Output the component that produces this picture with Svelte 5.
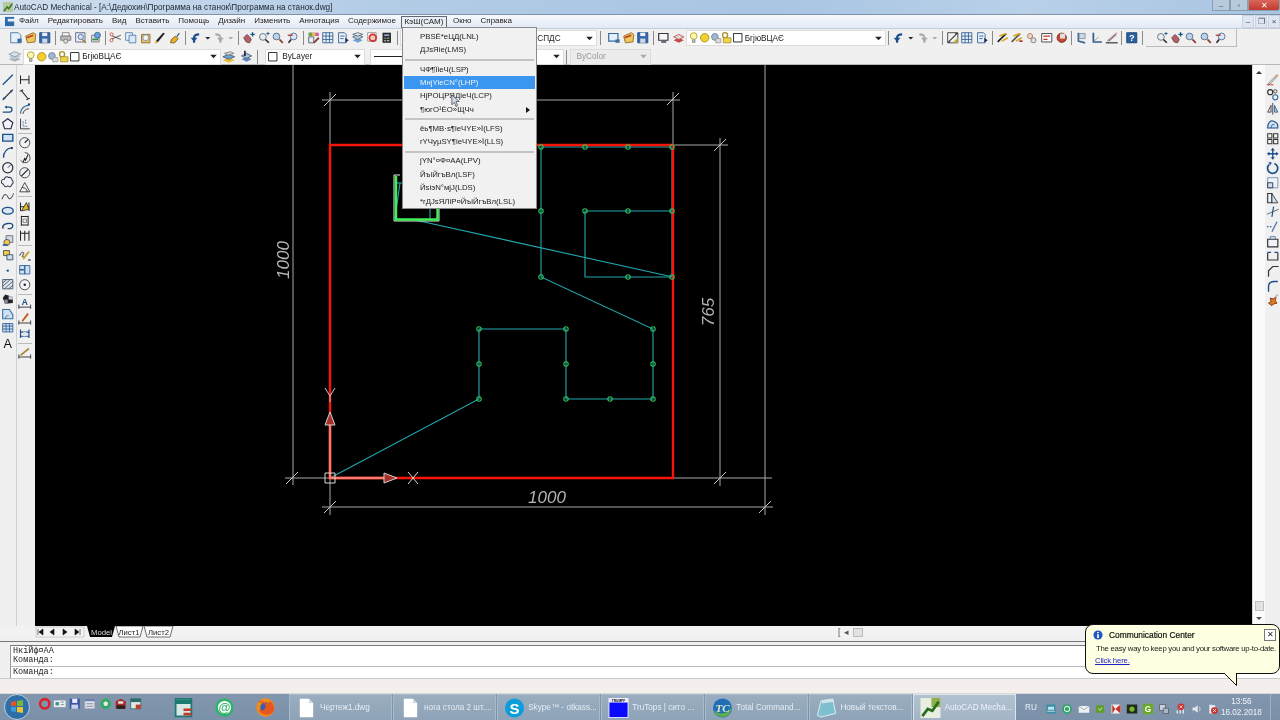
<script>
  const B = '#1c4f8a', D = '#333', G = '#777', Y = '#e8c33a', R = '#c8352a';
  const dim = (extra) => `<path d="M3 3v10M13 3v10M3 8h10" stroke="#222" stroke-width="1.2"/>${extra || ''}`;
  const ic = {
    page: `<path d="M2 2h9l3 3v9H2z" fill="#e6f0fa" stroke="#3f6f9f"/><path d="M10 9h5v5h-5z" fill="#3f6f9f"/>`,
    open: `<path d="M2 6l9-4 3 2-1 9-9 1z" fill="#efc75e" stroke="#8a6a1d"/><path d="M3 8l8-3" stroke="#c0392b" stroke-width="2"/>`,
    save: `<path d="M2 2h12v12H2z" fill="#3a68a8" stroke="#244a7c"/><path d="M5 2h6v4H5z" fill="#eef"/><path d="M5 9h6v5H5z" fill="#cbd8ea"/>`,
    plot: `<path d="M4 2h8v4H4z" fill="#fff" stroke="${G}"/><path d="M2 6h12v5H2z" fill="#bbb" stroke="${G}"/><circle cx="8" cy="12" r="2.5" fill="#ddd" stroke="${G}"/>`,
    prev: `<path d="M2 2h11v11H2z" fill="#eef3fa" stroke="#557"/><circle cx="8" cy="7" r="3.2" fill="#cfe0f5" stroke="#44679a"/><path d="M10 10l4 4" stroke="#a37b2a" stroke-width="1.8"/>`,
    pub: `<path d="M3 5h9v8H3z" fill="#ddd" stroke="${G}"/><circle cx="10" cy="5" r="3.5" fill="#6fa2d6" stroke="#2f5f96"/><path d="M4 10h7" stroke="#2c8f4a" stroke-width="2"/>`,
    cut: `<path d="M2 5l12 5M2 10l12-5" stroke="#444"/><circle cx="3" cy="4" r="1.8" fill="#fff" stroke="${R}"/><circle cx="3" cy="11" r="1.8" fill="#fff" stroke="${R}"/>`,
    copy: `<path d="M2 2h8v9H2z" fill="#eef3fa" stroke="#4d79a8"/><path d="M6 5h8v9H6z" fill="#dbe8f6" stroke="#4d79a8"/>`,
    paste: `<path d="M3 4h10v10H3z" fill="#e8bf6a" stroke="#8b6a1e"/><circle cx="8" cy="8" r="3.5" fill="#f3f3f3" stroke="#6a8cb3"/>`,
    brush: `<path d="M3 14l3-1 8-10-2-1-8 9z" fill="#222"/><path d="M3 14l2-2" stroke="#e2a21b" stroke-width="2"/>`,
    paint: `<path d="M3 14l1-4 5-4 3 3-4 5z" fill="#e7ad2c" stroke="#7c5a12"/><path d="M10 6l3-4 1 1-3 4z" fill="#33578a"/>`,
    undo: `<path d="M6 14V8c0-3 2-4 6-4" stroke="${B}" stroke-width="2.6"/><path d="M2 8h8l-4 5z" fill="${B}"/>`,
    redo: `<path d="M10 14V8c0-3-2-4-6-4" stroke="#aaa" stroke-width="2.4"/><path d="M6 8h8l-4 5z" fill="#aaa"/>`,
    down: `<path d="M5 7h6l-3 3z" fill="#223"/>`,
    downg: `<path d="M5 7h6l-3 3z" fill="#aaa"/>`,
    pan: `<path d="M2 8l4-4 3 3 2 3-2 4-4-1z" fill="#b0626a" stroke="#6f3a3f"/><path d="M10 4h5M12.5 1.5v5" stroke="${B}" stroke-width="1.6"/>`,
    zplus: `<circle cx="7" cy="7" r="4" fill="#e7eef7" stroke="#566"/><path d="M10 10l4 4" stroke="#222" stroke-width="1.8"/><path d="M11 3h4M13 1v4" stroke="${B}"/>`,
    zoom: `<circle cx="6.5" cy="6.5" r="4" fill="#bcd3ea" stroke="#49688a"/><path d="M10 10l4 4" stroke="#8a3b30" stroke-width="2"/>`,
    zback: `<circle cx="9" cy="6.5" r="4" fill="#dfe8f2" stroke="#49688a"/><path d="M6 10l-3 4" stroke="#222" stroke-width="1.8"/><path d="M2 5h6" stroke="#a33" stroke-width="1.5"/>`,
    props: `<path d="M2 2h12v4H2z" fill="#d655b3"/><path d="M2 2h4v4H2z" fill="#5bb04e"/><path d="M6 2h4v4H6z" fill="#e0c13a"/><path d="M2 7h6v7H2z" fill="#e8eef5" stroke="#556"/><path d="M8 14l6-6" stroke="#8a3b30" stroke-width="2.2"/>`,
    grid: `<path d="M2 2h12v12H2z" fill="#e8eff8" stroke="#2e5c94"/><path d="M6 2v12M10 2v12M2 6h12M2 10h12" stroke="#2e5c94"/>`,
    sheet: `<path d="M3 2h7l2 2v10H3z" fill="#e8eff8" stroke="#2e5c94"/><path d="M5 6h5M5 9h4" stroke="#2e5c94"/><path d="M11 8l4 3-4 3z" fill="#225"/>`,
    stack: `<path d="M2 11l6-3 6 3-6 3z" fill="#6fa2d6"/><path d="M2 7l6-3 6 3-6 3z" fill="#b9c9da" stroke="#567"/><path d="M2 4l6-2 6 2-6 2z" fill="#dfe8f2" stroke="#567"/>`,
    markup: `<path d="M2 2h10v10H2z" fill="#fff" stroke="#888"/><circle cx="8" cy="8" r="4" fill="#f5c8c4" stroke="#d12f25" stroke-width="2"/>`,
    calc: `<path d="M3 2h10v12H3z" fill="#2c2c2c"/><path d="M5 4h6v2H5z" fill="#9ad"/><path d="M5 8h2v1H5zM8 8h3v1H8zM5 11h2v1H5zM8 11h3v1H8z" fill="#ddd"/>`,
    ldoc: `<path d="M2 3h11v9H2z" fill="#e6f0fa" stroke="#34689f" stroke-width="1.4"/><path d="M10 10h5v4h-5z" fill="#3f6f9f"/>`,
    view: `<path d="M2 3h11v8H2z" fill="#f5f5f5" stroke="#334" stroke-width="1.4"/><path d="M5 13h6" stroke="#334" stroke-width="1.6"/>`,
    layer2: `<path d="M2 11l6-3 6 3-6 3z" fill="#c24a4a"/><path d="M2 7l6-3 6 3-6 3z" fill="#ddd" stroke="#c24a4a"/>`,
    layers: `<path d="M1 11l7-3 7 3-7 3z" fill="#a8b4c0"/><path d="M1 8l7-3 7 3-7 3z" fill="#c0cad4"/><path d="M1 5l7-3 7 3-7 3z" fill="#dbe2e8" stroke="#8a98a6"/>`,
    lmatch: `<path d="M1 12l7-3 7 3-7 3z" fill="#e6c037"/><path d="M1 8l7-3 7 3-7 3z" fill="#6fa2d6" stroke="#456"/><path d="M3 4l7-2 4 2-7 2z" fill="#ddd" stroke="#777"/>`,
    lprev: `<path d="M3 11l6-3 6 3-6 3z" fill="#5c86b4"/><path d="M3 7l6-3 6 3-6 3z" fill="#a9c3dd" stroke="#456"/><path d="M7 1v6" stroke="#224" stroke-width="2"/>`,
    bulb: `<circle cx="8" cy="6" r="4" fill="#fff6a8" stroke="#a89a33"/><path d="M6.5 10.5h3v3h-3z" fill="#ccc" stroke="#888"/>`,
    sun: `<circle cx="8" cy="8" r="5" fill="#f0cf2e" stroke="#a98f14"/>`,
    vp: `<circle cx="7" cy="7" r="4" fill="#9fb8cf" stroke="#6b8499"/><path d="M8 9h6v5H8z" fill="#dcdcdc" stroke="#999"/>`,
    lock: `<circle cx="6" cy="5" r="3" fill="none" stroke="#a8912d" stroke-width="1.6"/><path d="M4 8h9v6H4z" fill="#efd44a" stroke="#a8912d"/>`,
    box: `<path d="M3 3h10v10H3z" fill="#fff" stroke="#111"/>`,
    linem: `<path d="M3 13L13 3M2 13h3M11 3h3" stroke="#333" stroke-width="1.2"/><path d="M2 2h12v12H2z" stroke="#333"/><path d="M8 14l6-6v6z" fill="#c0a53a"/>`,
    wand: `<path d="M2 13L12 3" stroke="#222" stroke-width="2"/><path d="M4 6l8-3M7 12l7-4" stroke="#d9a41e" stroke-width="2"/>`,
    wand2: `<path d="M2 13L12 3" stroke="#555" stroke-width="2"/><path d="M4 6l8-3M7 12l7-4" stroke="#d9a41e" stroke-width="2"/><path d="M11 12h4" stroke="#a33" stroke-width="2"/>`,
    cogs: `<circle cx="6" cy="6" r="3" fill="#dfdfdf" stroke="#c06a2c"/><circle cx="10" cy="11" r="3" fill="#dfdfdf" stroke="#777"/>`,
    frame: `<path d="M2 3h12v10H2z" fill="#fff" stroke="#333"/><path d="M4 6h8M4 10h5" stroke="#c0392b" stroke-width="1.4"/>`,
    fire: `<circle cx="8" cy="8" r="5.5" fill="#c7452e" stroke="#6e2315"/><path d="M6 3h6v6H6z" fill="#dfdfdf"/>`,
    ucs: `<path d="M4 2v10l8 2" stroke="#3b6b9a" stroke-width="2"/><path d="M5 3h7v6H5z" fill="#cfd9e3" stroke="#88a"/>`,
    ucs2: `<path d="M4 2v11h10" stroke="#2f5d8e" stroke-width="2"/><path d="M4 13l6-6" stroke="#888"/>`,
    ucs3: `<path d="M1 14h14" stroke="#333" stroke-width="1.4"/><path d="M3 12l10-8" stroke="#9ab" stroke-width="2.4"/><path d="M5 12l9-10" stroke="#c0392b"/>`,
    help: `<path d="M2 2h12v12H2z" fill="#2c5f9e" stroke="#1b3f70"/><text x="8" y="12" font-size="11" font-weight="bold" text-anchor="middle" fill="#fff" font-family="Liberation Sans">?</text>`,
    // draw
    line: `<path d="M2 14L14 2" stroke="${B}" stroke-width="1.5"/>`,
    xline: `<path d="M2 14L14 2" stroke="#222" stroke-width="1.4"/><circle cx="4" cy="12" r="1.3" fill="${B}"/><circle cx="12" cy="4" r="1.3" fill="${B}"/>`,
    pline: `<path d="M2 12h8a3 3 0 0 0 0-6H6" stroke="${B}" stroke-width="1.5"/><path d="M7 4L4 6l3 2z" fill="${B}"/>`,
    polygon: `<path d="M8 2l6 4.5-2.3 7.5H4.3L2 6.5z" fill="#f0f4f8" stroke="#224" stroke-width="1.3"/>`,
    rect: `<path d="M2 4h12v8H2z" fill="#cfe0f2" stroke="${B}" stroke-width="1.6"/>`,
    arc: `<path d="M3 14C3 7 7 3 13 2" stroke="${B}" stroke-width="1.6"/><circle cx="13" cy="2.5" r="1.3" fill="#333"/>`,
    circle: `<circle cx="8" cy="8" r="6" fill="#eef3f8" stroke="#333" stroke-width="1.5"/><path d="M8 8l4-4" stroke="#224"/>`,
    cloud: `<path d="M4 5a3 3 0 0 1 5-2 3 3 0 0 1 4 3 3 3 0 0 1 0 5 3 3 0 0 1-5 2 3 3 0 0 1-5-2 3 3 0 0 1 1-6z" fill="#f0f4f8" stroke="#334" stroke-width="1.2"/>`,
    spline: `<path d="M1 11c3-7 5-7 7-3s4 3 7-4" stroke="#556" stroke-width="1.2"/>`,
    ellipse: `<ellipse cx="8" cy="8" rx="6.5" ry="4" fill="#d9e6f3" stroke="${B}" stroke-width="1.6"/>`,
    ellarc: `<path d="M2 11C1 5 14 3 14 8c0 3-4 4-6 3" stroke="${B}" stroke-width="1.6"/><path d="M2 11l2-1" stroke="#c0392b"/>`,
    insert: `<path d="M6 2h8v8H6z" fill="#cdd9e6" stroke="#667" /><circle cx="7" cy="10" r="3.6" fill="#edc74e" stroke="#555"/><path d="M2 13h6" stroke="#2f5d8e" stroke-width="2"/>`,
    block: `<path d="M3 3h7v6H3z" fill="#f1cd4e" stroke="#444"/><path d="M7 8h7v6H7z" fill="#cfe0f2" stroke="#345"/>`,
    point: `<circle cx="8" cy="9" r="1.4" fill="${B}"/>`,
    hatch: `<path d="M2 3h12v11H2z" fill="#dfe6ee" stroke="#3a4d66"/><path d="M2 7l5-4M2 11l9-8M4 14l10-9M9 14l5-4" stroke="#3a4d66"/>`,
    grad: `<path d="M2 7l3-4 9 3v7l-9 1z" fill="#222"/><path d="M4 14V9h4v5z" fill="#889"/><path d="M9 5h5v4H9z" fill="#ccd"/>`,
    region: `<path d="M2 3h8l4 6v5H2z" fill="#cfe0f2" stroke="#3a6fa3" stroke-width="1.3"/><path d="M5 14a4 4 0 0 1 4-4" stroke="#3a6fa3"/>`,
    table: `<path d="M2 3h12v10H2z" fill="#cfe0f2" stroke="#2e5c94"/><path d="M2 6h12M2 9.5h12M6 3v10M10 3v10" stroke="#2e5c94"/>`,
    textA: `<text x="8" y="14" font-size="15" text-anchor="middle" fill="#111" font-family="Liberation Sans">A</text>`,
    // dims
    dlin: dim(),
    dalign: `<path d="M2 4l4-2M10 14l4-2M4 3l8 10" stroke="#222" stroke-width="1.3"/>`,
    darc: `<path d="M3 14C3 8 7 4 13 4" stroke="#3a6fa3" stroke-width="1.5"/><path d="M6 14c0-3 3-6 7-6" stroke="#222"/><circle cx="13" cy="3" r="1.4" fill="${B}"/>`,
    dord: `<path d="M3 2v12h11" stroke="#222"/><path d="M6 5v6h6M9 3v5" stroke="#3a6fa3" stroke-dasharray="2 1"/>`,
    drad: `<circle cx="8" cy="8" r="6" fill="#f0f4f8" stroke="#333"/><path d="M8 8l4-4" stroke="#222" stroke-width="1.4"/>`,
    djog: `<path d="M8 2a6 6 0 1 1-5 9" stroke="#333"/><path d="M6 13l2-4 1 2 3-7" stroke="#222" stroke-width="1.3"/>`,
    ddia: `<circle cx="8" cy="8" r="6" fill="#f0f4f8" stroke="#333"/><path d="M4 12l8-8" stroke="#222" stroke-width="1.4"/>`,
    dang: `<path d="M2 14h12L8 3z" fill="#f0f4f8" stroke="#333"/><path d="M5 9a6 6 0 0 1 6 5" stroke="#222"/>`,
    dquick: dim(`<path d="M4 13l6-10 3 8z" fill="#e3b91f" stroke="#333"/>`),
    dbase: `<path d="M4 2v12M12 2v12M4 3h8M4 13h8" stroke="#222" stroke-width="1.2"/><path d="M6 6h4v4H6z" stroke="#777"/>`,
    dcont: `<path d="M3 2v12M8 2v12M13 2v12M3 5h10" stroke="#222" stroke-width="1.2"/>`,
    dtol: `<path d="M2 8c2-5 4-5 5-3l-2 4 3 1" stroke="#222"/><path d="M6 12l7-9" stroke="#d0a024" stroke-width="2.2"/><path d="M12 13h3" stroke="#333" stroke-width="1.4"/>`,
    dcen: `<path d="M2 3h12v10H2z" fill="#cfe0f2" stroke="#2e5c94"/><path d="M8 3v10M2 8h5" stroke="#2e5c94" stroke-width="1.5"/>`,
    dmark: `<circle cx="8" cy="8" r="6" fill="#f6f6f6" stroke="#333"/><circle cx="8" cy="8" r="1.5" fill="#225"/>`,
    dA: `<text x="8" y="10" font-size="10" font-weight="bold" text-anchor="middle" fill="${B}" font-family="Liberation Sans">A</text><path d="M1 12h14M1 9v5M15 9v5" stroke="#222"/>`,
    dedit: `<path d="M1 13h14M1 10v5M15 10v5" stroke="#222"/><path d="M5 11l7-9" stroke="#c45a1d" stroke-width="2.2"/>`,
    dspace: `<path d="M3 3v10M13 3v10M3 6h10M3 11h10" stroke="${B}" stroke-width="1.4"/><path d="M6 6h4v5H6z" fill="#dfe6ee"/>`,
    dup: `<path d="M1 13h14M1 10v5M15 10v5" stroke="#222"/><path d="M3 11L13 3" stroke="#b08a45" stroke-width="2"/>`,
    // modify
    erase: `<path d="M2 14l3-1L14 3l-1-1L4 11z" fill="#eee" stroke="#777"/><path d="M10 5l3-3 1 1-3 3z" fill="#d9a441"/><path d="M1 14h8" stroke="#c0392b"/>`,
    mcopy: `<circle cx="5" cy="5" r="3" stroke="#333" stroke-width="1.4"/><circle cx="11" cy="11" r="3" stroke="#3a6fa3" stroke-width="1.4"/><circle cx="11" cy="4" r="2" stroke="#333"/>`,
    mirror: `<path d="M8 1v14" stroke="#333"/><path d="M6 4v8H2z" fill="#eef3f8" stroke="#333"/><path d="M10 4v8h4z" fill="#a8c6e4" stroke="#2e5c94"/>`,
    offset: `<path d="M2 12c0-5 4-9 7-7 2 1 5 2 5 5v3H2z" fill="#cfe0f2" stroke="${B}" stroke-width="1.3"/><path d="M6 13c0-3 2-5 4-4" stroke="${B}"/>`,
    array: `<path d="M2 2h5v5H2zM9 2h5v5H9zM2 9h5v5H2zM9 9h5v5H9z" fill="#f5f5f5" stroke="#333" stroke-width="1.2"/>`,
    move: `<path d="M8 1l2.5 3h-5zM8 15l2.5-3h-5zM1 8l3-2.500v5zM15 8l-3-2.500v5z" fill="${B}"/><path d="M8 3v10M3 8h10" stroke="${B}" stroke-width="1.6"/>`,
    rotate: `<path d="M4 4a6 6 0 1 0 6-1" stroke="${B}" stroke-width="2"/><path d="M3 1l4 1-2 3z" fill="${B}"/>`,
    scale: `<path d="M2 2h12v12H2z" fill="#eef3f8" stroke="#6a8cb3"/><path d="M2 8h6v6H2z" fill="#cfe0f2" stroke="#224"/>`,
    stretch: `<path d="M2 3h5v11H2z" fill="#eef3f8" stroke="#333" stroke-width="1.3"/><path d="M7 3l7 11H7z" fill="#cfe0f2" stroke="#333"/>`,
    trim: `<path d="M1 11l14-6" stroke="#555"/><path d="M9 2l-2 12" stroke="${B}" stroke-width="1.4"/>`,
    extend: `<path d="M1 8h6" stroke="${B}" stroke-dasharray="2 1.500" stroke-width="1.3"/><path d="M7 14l6-12" stroke="#3a6fa3" stroke-width="1.4"/>`,
    brk: `<path d="M2 5h12v9H2z" fill="#eef3f8" stroke="#333" stroke-width="1.4"/><path d="M5 5V2h6v3" stroke="#3a6fa3"/>`,
    brk2: `<path d="M2 4v9h12V4" stroke="#333" stroke-width="1.4"/><path d="M2 4h4M10 4h4" stroke="${B}" stroke-width="1.4"/>`,
    chamfer: `<path d="M3 15V8l5-5h7" stroke="#333" stroke-width="1.4"/>`,
    fillet: `<path d="M3 15V9c0-4 3-6 7-6h4" stroke="${B}" stroke-width="1.6"/>`,
    explode: `<path d="M3 12l3-2-1-4 4 1 3-3-1 5 2 3-4 1-2 2z" fill="#de7a1e" stroke="#7a2e12"/><path d="M11 5l3-3" stroke="#bbb" stroke-width="2"/>`,
    // quick launch
    q1: `<circle cx="8" cy="8" r="5.500" stroke="#d8232a" stroke-width="3"/>`,
    q2: `<path d="M1 4h14v8H1z" fill="#e6eef0"/><path d="M3 6h4v4H3z" fill="#3c8f8a"/><path d="M9 6h4M9 9h4" stroke="#889"/>`,
    q3: `<path d="M2 2h12v12H2z" fill="#3a55a8"/><path d="M5 2h6v5H5z" fill="#eef"/><path d="M4 9h8v5H4z" fill="#c8d2ea"/>`,
    q4: `<path d="M2 2h12v12H2z" fill="#dfe3ee" stroke="#99a"/><path d="M2 2h12v3H2z" fill="#6a7fb0"/><path d="M4 8h8M4 11h8" stroke="#7a7f90"/>`,
    q5: `<circle cx="8" cy="8" r="6.500" fill="#36ad6a"/><circle cx="8" cy="8" r="3.500" fill="#d8f0e0" stroke="#1c7a48"/>`,
    q6: `<path d="M2 5l6-3 6 3v9H2z" fill="#a92c2c"/><path d="M3 10h10v4H3z" fill="#222"/><path d="M5 5h6v3H5z" fill="#e0e0e0"/>`,
    q7: `<path d="M2 2h12v12H2z" fill="#dfe8e6" stroke="#2d6e6a"/><path d="M2 2h12v4H2z" fill="#2d6e6a"/><path d="M8 9h6v5H8z" fill="#c0392b"/>`,
    // tray
    t1: `<path d="M2 2h12v12H2z" fill="#3a8fa8"/><path d="M4 5h8v4H4z" fill="#bfe4ee"/><path d="M3 11h10" stroke="#e8f4f8"/>`,
    t2: `<circle cx="8" cy="8" r="6.500" fill="#2fa36b"/><circle cx="8" cy="8" r="3.500" stroke="#d8f0e0" stroke-width="1.4"/>`,
    t3: `<path d="M1 4h14v9H1z" fill="#eef2f4"/><path d="M1 4l7 5 7-5" stroke="#8a9aa6"/>`,
    t4: `<path d="M3 3h10l1 10H2z" fill="#5f9e2c"/><path d="M6 7l2 3 3-4" stroke="#e4f2d4"/>`,
    t5: `<path d="M2 2h12v12H2z" fill="#f0f0f0"/><path d="M3 2l4 6-4 6zM7 8l7-6v12z" fill="#c9332b"/>`,
    t6: `<path d="M1 2h14v12H1z" fill="#1e2a1a"/><circle cx="8" cy="8" r="3.500" fill="#76b82a"/>`,
    t7: `<path d="M1 1h14v14H1z" fill="#6aa82c"/><text x="8" y="12.500" font-size="11" font-weight="bold" text-anchor="middle" fill="#fff" font-family="Liberation Sans">G</text>`,
    t8: `<path d="M2 2h8v8H2z" fill="#c4d0dc" stroke="#556"/><path d="M7 7h7v7H7z" fill="#a8b8c8" stroke="#556"/>`,
    t9: `<path d="M2 10h2v4H2zM6 8h2v6H6zM10 6h2v8h-2z" fill="#dde4ea"/><circle cx="8" cy="5" r="4.500" fill="#c9332b"/><path d="M6 3l4 4M10 3L6 7" stroke="#fff"/>`,
    t10: `<path d="M2 6h3l4-3v10L5 10H2z" fill="#dde4ea"/><path d="M11 5c1.500 2 1.500 4 0 6" stroke="#dde4ea"/>`,
    t11: `<path d="M3 2l8 1v11H3z" fill="#e4e8ee"/><circle cx="10" cy="10" r="4.500" fill="#c9332b"/><path d="M8 8l4 4M12 8l-4 4" stroke="#fff"/>`
  };

  const menus = ['Файл', 'Редактировать', 'Вид', 'Вставить', 'Помощь', 'Дизайн', 'Изменить', 'Аннотация', 'Содержимое'];
  const left1 = ['line','xline','pline','polygon','rect','arc','circle','cloud','spline','ellipse','ellarc','insert','block','point','hatch','grad','region','table','textA'];
  const left2 = ['dlin','dalign','darc','dord','|','drad','djog','ddia','dang','|','dquick','dbase','dcont','|','dtol','dcen','dmark','|','dA','dedit','dspace','|','dup'];
  const right = ['erase','mcopy','mirror','offset','array','move','rotate','scale','stretch','trim','extend','brk','brk2','chamfer','fillet','explode'];

  const row1a = ['page','open','save','|','plot','prev','pub','|','cut','copy','paste','brush','paint','|','undo','down','redo','downg','|','pan','zplus','zoom','zback','|','props','grid','sheet','stack','markup','calc','|'];
  const row1b = ['ldoc','open','save','|','view','layer2'];
  const row1c = ['undo','down','redo','downg','|','linem','grid','sheet','|','wand','wand2','cogs','frame','fire','|','ucs','ucs2','ucs3','|','help','|'];
  const row1d = ['zplus','pan','zoom','zoom','zback'];
  const lamps = ['bulb','sun','vp','lock','box'];

  const drop = [
    ['PBSЁ*eЦД(LNL)', 'ДJsЯie(LMS)'],
    ['ЧФ¶ЇieЧ(LSP)', 'МнјYieСN°(LHP)', 'НjРОЦРЯДieЧ(LCP)', '¶югО¹ЁО»ЩЧч'],
    ['ёь¶МВ·s¶ieЧYE»Ї(LFS)', 'rYЧyµSY¶ieЧYE»Ї(LLS)'],
    ['jYN°¤Ф¤АА(LPV)', 'ЙъiЙгъВл(LSF)', 'ЙsiэN°мjJ(LDS)', '*rДJsЯЛiР¤ЙъiЙгъВл(LSL)']
  ];

  const quick = ['q1','q2','q3','q4','q5','q6','q7'];
  const tasks = [
    { t: 'Чертеж1.dwg', i: 'doc' },
    { t: 'нога стола 2 шт....', i: 'doc' },
    { t: 'Skype™ - otkass...', i: 'skype' },
    { t: 'TruTops | сито ...', i: 'tru' },
    { t: 'Total Command...', i: 'tc' },
    { t: 'Новый текстов...', i: 'note' },
    { t: 'AutoCAD Mecha...', i: 'acad', on: true }
  ];
  const tray = ['t1','t2','t3','t4','t5','t6','t7','t8','t9','t10','t11'];

  const teal = [
    'M541 147H672V277', 'M541 147V277L653 329V399H566V329H479V399L330 478',
    'M585 211H672', 'M585 211V277H672', 'M415 220L673 277', 'M400 183L395 218', 'M397 183H404', 'M430 205V220'
  ];
  const nodes = [[541,147],[585,147],[628,147],[672,147],[541,211],[585,211],[628,211],[672,211],[628,277],[672,277],[541,277],
    [479,329],[566,329],[479,364],[566,364],[479,399],[566,399],[610,399],[653,399],[653,364],[653,329]];
  const dims = [
    'M293 65V485','M285 478H330','M330 92V145','M322 100H680','M673 92V145','M673 145H728','M720 138V486',
    'M765 65V515','M673 478H772','M330 478V515','M322 507H773'
  ];
  const ticks = [[292,478],[330,100],[673,99],[720,145],[720,478],[330,507],[765,507]];
</script>

{#snippet icon(name)}
  {#if name === '|'}
    <span class="sep"></span>
  {:else}
    <span class="ic" class:narrow={name === 'down' || name === 'downg'}><svg viewBox="0 0 16 16" fill="none">{@html ic[name]}</svg></span>
  {/if}
{/snippet}

{#snippet arrow(off)}
  <svg class="dd-arrow" class:off viewBox="0 0 8 6"><path d="M0 1h8L4 5z" /></svg>
{/snippet}

<div class="screen">
  <header class="title">
    <svg class="app-ic" viewBox="0 0 12 12"><path d="M0 0h12v12H0z" fill="#b8c9a0"/><path d="M1 11L5 6l2 2 4-6" stroke="#3c7a2c" stroke-width="2" fill="none"/></svg>
    <span class="title-txt">AutoCAD Mechanical - [A:\Дедюхин\Программа на станок\Программа на станок.dwg]</span>
    <div class="winbtns">
      <span class="wb">–</span><span class="wb">▫</span><span class="wb close">✕</span>
    </div>
  </header>

  <nav class="menubar">
    <svg class="doc-ic" viewBox="0 0 12 12"><path d="M0 1h10v10H0z" fill="#2c6aa8"/><path d="M3 3h8v3H3z" fill="#e6eef6"/></svg>
    <div class="menus">
      {#each menus as m}<span>{m}</span>{/each}
      <span class="m-open">КэШ(САМ)</span>
      <span class="m-after">Окно</span>
      <span>Справка</span>
    </div>
    <div class="docbtns"><span>–</span><span>❐</span><span>×</span></div>

    <div class="dropdown">
      {#each drop as group, g}
        {#if g > 0}<hr />{/if}
        {#each group as item}
          <div class="d-item" class:hl={item.includes('LHP')}>
            {item}
            {#if item.startsWith('¶юг')}<i class="caret"></i>{/if}
          </div>
        {/each}
      {/each}
    </div>
  </nav>

  <div class="tb tb1">
    {#each row1a as n}{@render icon(n)}{/each}
    <div class="combo c-style"><span>СПДС</span>{@render arrow(false)}</div>
    <span class="sep"></span>
    <div class="tb-b">{#each row1b as n}{@render icon(n)}{/each}</div>
    <div class="combo c-layer1">
      {#each lamps as n}{@render icon(n)}{/each}
      <span class="lname">БгjюВЦАЄ</span>{@render arrow(false)}
    </div>
    <span class="sep"></span>
    {#each row1c as n}{@render icon(n)}{/each}
    <div class="zoomgroup">{#each row1d as n}{@render icon(n)}{/each}</div>
  </div>

  <div class="tb tb2">
    {@render icon('layers')}
    <div class="combo c-layer2">
      {#each lamps as n}{@render icon(n)}{/each}
      <span class="lname">БгjюВЦАЄ</span>{@render arrow(false)}
    </div>
    {@render icon('lmatch')}
    <span class="gap3"></span>
    {@render icon('lprev')}
    <span class="sep s2"></span>
    <div class="combo c-color">{@render icon('box')}<span class="lname">ByLayer</span>{@render arrow(false)}</div>
    <div class="combo c-ltype"><span class="ltline"></span>{@render arrow(false)}</div>
    <span class="sep"></span>
    <div class="combo c-plot"><span class="lname">ByColor</span>{@render arrow(true)}</div>
  </div>

  <main class="work">
    <aside class="left">
      <div class="lcol">{#each left1 as n}{@render icon(n)}{/each}</div>
      <div class="lcol c2">{#each left2 as n}{@render icon(n)}{/each}</div>
    </aside>

    <div class="canvas">
      <svg viewBox="35 65 1217 561" fill="none">
        {#each dims as d}<path {d} stroke="#a8a8a8" />{/each}
        {#each ticks as [x, y]}<path d="M{x - 6} {y + 6}L{x + 6} {y - 6}" stroke="#c8c8c8" />{/each}
        {#each teal as d}<path {d} stroke="#22a8b0" stroke-width="1.1" />{/each}
        <path d="M330 145H673V478H330z" stroke="#f81408" stroke-width="2.4" />
        <path d="M330 425V478H389" stroke="#ff7a6c" stroke-width="2.4" />
        <path d="M394 175V221H439V200" stroke="#d8f4dc" stroke-width="1" />
        <path d="M394 175H400" stroke="#d8f4dc" stroke-width="1" />
        <path d="M396 176V219.500H437.500V205" stroke="#3ff05a" stroke-width="2.4" />
        {#each nodes as [cx, cy]}<circle {cx} {cy} r="2.2" stroke="#2fc45a" stroke-width="1.1" />{/each}

        <path d="M325 388L330 396L335 388M330 396V402" stroke="#c8c8c8" />
        <path d="M330 412L335 425H325z" stroke="#d0d0d0" fill="#a8302a" />
        <path d="M325 473h10v10h-10z" stroke="#d8d8d8" />
        <path d="M384 473L397 478L384 483z" stroke="#d0d0d0" fill="#a8302a" />
        <path d="M408 472L418 484M418 472L408 484" stroke="#d8d8d8" />

        <text class="dimtxt" x="547" y="503" text-anchor="middle">1000</text>
        <text class="dimtxt" transform="translate(289 260) rotate(-90)" text-anchor="middle">1000</text>
        <text class="dimtxt" transform="translate(714 312) rotate(-90)" text-anchor="middle">765</text>
      </svg>
    </div>

    <div class="vscroll">
      <i class="up"></i>
      <span class="vspace"></span>
      <span class="vthumb"></span>
      <i class="dn"></i>
    </div>
    <aside class="right">
      {#each right as n}{@render icon(n)}{/each}
    </aside>
  </main>

  <div class="tabs">
    <svg class="tabsvg" viewBox="0 0 176 12">
      <g class="nav">
        <path d="M36 1h48v10H36z" fill="#f4f4f4" stroke="#ccc" />
        <path d="M38 3v6M43 3l-4 3 4 3zM54 3l-4 3 4 3zM63 3l4 3-4 3zM75 3l4 3-4 3zM80 3v6" fill="#111" stroke="#111" stroke-width=".6" />
      </g>
      <path d="M87 0h28l-3 11H90z" fill="#000" />
      <text x="91" y="8.500" class="t-on">Model</text>
      <path d="M116 0h27l-3 11h-21z" fill="#fff" stroke="#333" stroke-width=".7" />
      <text x="118.500" y="8.500">Лист1</text>
      <path d="M144 0h29l-3 11h-23z" fill="#fff" stroke="#333" stroke-width=".7" />
      <text x="148" y="8.500">Лист2</text>
    </svg>
    <div class="hscroll"><span class="brk">[</span><span class="tri">◂</span><span class="hthumb"></span></div>
  </div>

  <section class="cmd">
    <div class="hist">
      <div>НкiЙф¤АА</div>
      <div>Команда:</div>
    </div>
    <div class="prompt">Команда:</div>
  </section>

  <div class="status"></div>

  <footer class="taskbar">
    <div class="start">
      <svg viewBox="0 0 26 26">
        <circle cx="13" cy="13" r="12.500" fill="#2f6fa8" stroke="#b8cfe0" />
        <path d="M7 8l5-1v5H7z" fill="#e8512c" />
        <path d="M13 7l6-1v6h-6z" fill="#7ab53a" />
        <path d="M7 13h5v5l-5-1z" fill="#3b9de0" />
        <path d="M13 13h6v6l-6-1z" fill="#f2c12e" />
      </svg>
    </div>
    <div class="quick">
      {#each quick as n}{@render icon(n)}{/each}
    </div>
    <div class="pinned">
      <svg viewBox="0 0 24 24"><path d="M3 2h18v20H3z" fill="#d8e8e4" stroke="#1b7a72" stroke-width="2" /><path d="M3 3h18v5H3z" fill="#1b7a72" /><path d="M12 13h9v3h-9zM12 18h9v3h-9z" fill="#c0392b" /></svg>
      <svg viewBox="0 0 24 24"><circle cx="12" cy="12" r="10.500" fill="#2fb36a" /><circle cx="12" cy="12" r="7.500" fill="#fff" /><text x="12" y="17" font-size="14" font-weight="bold" text-anchor="middle" fill="#2fb36a" font-family="Liberation Sans">@</text></svg>
      <svg viewBox="0 0 24 24"><circle cx="12" cy="12" r="10.500" fill="#f28a1c" /><circle cx="12" cy="12" r="6" fill="#3d5bb0" /><path d="M4 6c5 0 9 2 8 6s-6 4-8 2c2 8 16 9 18 0 0-5-3-9-6-10 2 3 0 4-3 3S6 3 4 6z" fill="#e8561f" /></svg>
    </div>
    <div class="tasks">
      {#each tasks as t}
        <div class="task" class:on={t.on}>
          <span class="task-ic">
            {#if t.i === 'doc'}
              <svg viewBox="0 0 20 24"><path d="M2 1h11l5 5v17H2z" fill="#fff" /><path d="M13 1l5 5h-5z" fill="#c8d4de" /></svg>
            {:else if t.i === 'skype'}
              <svg viewBox="0 0 20 20"><circle cx="10" cy="10" r="9.500" fill="#0d9ddb" /><text x="10" y="15.500" font-size="15" font-weight="bold" text-anchor="middle" fill="#fff" font-family="Liberation Sans">S</text></svg>
            {:else if t.i === 'tru'}
              <svg viewBox="0 0 22 22"><path d="M0 0h22v22H0z" fill="#eef" /><path d="M1 5h20v16H1z" fill="#0a0aff" /><text x="11" y="4" font-size="3.600" font-weight="bold" text-anchor="middle" fill="#111" font-family="Liberation Sans">TRUMPF</text></svg>
            {:else if t.i === 'tc'}
              <svg viewBox="0 0 20 20"><circle cx="10" cy="10" r="9.500" fill="#1f6fb8" /><path d="M1 12c5 5 14 5 18-3 0 7-5 10-9 10s-8-3-9-7z" fill="#5fb04a" /><text x="10" y="14" font-size="11" font-style="italic" font-weight="bold" text-anchor="middle" fill="#dfe9c9" font-family="Liberation Serif">TC</text></svg>
            {:else if t.i === 'note'}
              <svg viewBox="0 0 22 22"><path d="M5 3l13-2 3 16-16 4-4-2z" fill="#7fc0d0" stroke="#e4eef2" /><path d="M6 3l12-2 1 3-13 2z" fill="#cfe4ea" /></svg>
            {:else}
              <svg viewBox="0 0 22 22"><path d="M0 0h22v22H0z" fill="#e9efe0" /><path d="M12 0h10v10H12z" fill="#8fb04a" /><path d="M2 20L8 12l5 2 7-10" stroke="#2a6e24" stroke-width="3" fill="none" /></svg>
            {/if}
          </span>
          <span class="task-t">{t.t}</span>
        </div>
      {/each}
    </div>
    <span class="lang">RU</span>
    <div class="tray">
      {#each tray as n}{@render icon(n)}{/each}
    </div>
    <div class="clock"><div>13:56</div><div>16.02.2018</div></div>
    <span class="show"></span>
  </footer>

  <aside class="balloon">
    <svg class="tail" viewBox="0 0 13 13"><path d="M0 0L12.500 12.500V0z" fill="#ffffe1" /><path d="M0 0L12.500 12.500V0" fill="none" stroke="#111" stroke-dasharray="17.700 100" /><path d="M12.500 0V12.500" stroke="#111" /></svg>
    <div class="b-head">
      <svg viewBox="0 0 12 12"><circle cx="6" cy="6" r="5.500" fill="#1f55c4" /><path d="M5 5h2v4.500H5zM5 2.500h2v1.500H5z" fill="#fff" /></svg>
      <strong>Communication Center</strong>
      <span class="b-x">✕</span>
    </div>
    <p>The easy way to keep you and your software up-to-date.</p>
    <a href="#top">Click here.</a>
  </aside>

  <svg class="cursor" viewBox="0 0 12 18"><path d="M1 1v12l3-3 2 5 2-1-2-5h4z" fill="#cfd8e8" stroke="#333" stroke-width=".8" /></svg>
</div>

<style>
  :global(body) {
    margin: 0;
    overflow: hidden;
  }
  .screen {
    position: relative;
    width: 1280px;
    height: 720px;
    display: flex;
    flex-direction: column;
    overflow: hidden;
    background: #f0f0f0;
    color: #111;
    font: 8.7px "Liberation Sans", sans-serif;
    filter: blur(0.4px);
  }
  .title {
    height: 15px;
    flex: none;
    display: flex;
    align-items: center;
    background: linear-gradient(100deg, #cfdeee 0%, #b3cce6 30%, #a8c5e3 60%, #b9d0e8 80%, #a8c4e2 100%);
    border-bottom: 1px solid #7e93a8;
    box-sizing: border-box;
    padding-left: 3px;
  }
  .app-ic {
    width: 10px;
    height: 10px;
    margin-right: 1px;
  }
  .title-txt {
    font-size: 8.200px;
    color: #1c2630;
  }
  .winbtns {
    margin-left: auto;
    display: flex;
    height: 11px;
    align-self: flex-start;
  }
  .wb {
    width: 18px;
    text-align: center;
    font-size: 8px;
    line-height: 11px;
    color: #556;
    background: #b7c9dc;
    border: 1px solid #8a9db0;
    border-top: 0;
    box-sizing: border-box;
  }
  .wb.close {
    width: 32px;
    background: linear-gradient(#d9665a, #c23a30);
    color: #fff;
    border-radius: 0 0 3px 0;
  }
  .menubar {
    position: relative;
    height: 14px;
    flex: none;
    display: flex;
    align-items: center;
    background: linear-gradient(#f6f8fc, #e2eaf6);
    border-bottom: 1px solid #c4ccd6;
    box-sizing: border-box;
    padding-left: 5px;
  }
  .doc-ic {
    width: 11px;
    height: 11px;
  }
  .menus {
    display: flex;
    margin-left: 3px;
    column-gap: 9px;
    font-size: 8px;
    color: #222;
  }
  .m-open {
    margin-left: -4px;
    padding: 0 2.500px;
    border: 1px solid #667;
    background: #e8eef6;
    line-height: 10px;
  }
  .m-after {
    margin-left: -3px;
  }
  .docbtns {
    margin-left: auto;
    display: flex;
    height: 13px;
  }
  .docbtns span {
    width: 12px;
    margin-left: 1px;
    text-align: center;
    font-size: 8px;
    line-height: 12px;
    color: #445;
    background: #dde6f2;
    border: 1px solid #c9d3e0;
    box-sizing: border-box;
  }
  .dropdown {
    position: absolute;
    z-index: 5;
    left: 402px;
    top: 12px;
    width: 135px;
    height: 182px;
    box-sizing: border-box;
    padding: 2px 1px;
    background: #f1f1f1;
    border: 1px solid #8a8a8a;
    color: #222;
    font-size: 7.800px;
  }
  .d-item {
    position: relative;
    height: 13.400px;
    line-height: 13.400px;
    padding-left: 16px;
    white-space: nowrap;
  }
  .d-item.hl {
    background: #3a96ee;
    color: #e8f2fc;
  }
  .caret {
    position: absolute;
    right: 5px;
    top: 4px;
    border-left: 4px solid #111;
    border-top: 3px solid transparent;
    border-bottom: 3px solid transparent;
  }
  hr {
    height: 2px;
    margin: 1.900px 1px;
    border: 0;
    background: #c4c4c4;
  }
  .tb {
    display: flex;
    flex: none;
    align-items: center;
    box-sizing: border-box;
    background: #f0f0f0;
  }
  .tb1 {
    height: 18px;
    padding-left: 8.500px;
  }
  .tb2 {
    height: 18px;
    padding: 2px 0 0 7.500px;
    border-bottom: 1px solid #b8b8b8;
  }
  .ic {
    flex: none;
    width: 14.700px;
    height: 14.700px;
    display: flex;
    align-items: center;
    justify-content: center;
  }
  .ic.narrow {
    width: 9px;
  }
  .ic svg {
    flex: none;
    width: 13.500px;
    height: 13.500px;
  }
  .sep {
    flex: none;
    width: 1px;
    height: 14px;
    margin: 0 2.500px;
    background: #8a8a8a;
  }
  .combo {
    flex: none;
    display: flex;
    align-items: center;
    box-sizing: border-box;
    height: 16px;
    background: #fff;
    border: 1px solid #dcdcdc;
    font-size: 8.200px;
    color: #222;
  }
  .dd-arrow {
    width: 7px;
    height: 5px;
    margin-left: auto;
    margin-right: 3px;
    fill: #222;
  }
  .dd-arrow.off {
    fill: #aaa;
  }
  .c-style {
    width: 197px;
    padding-left: 136px;
  }
  .tb-b {
    display: flex;
    margin-left: 3px;
  }
  .c-layer1 {
    width: 200px;
    padding-left: 1px;
  }
  .c-layer1 .ic, .c-layer2 .ic {
    width: 11px;
  }
  .lname {
    margin-left: 2px;
  }
  .c-layer2 {
    width: 198px;
    margin-left: 1px;
    padding-left: 1px;
  }
  .gap3 {
    width: 3px;
  }
  .s2 {
    margin-left: 3px;
    margin-right: 7px;
  }
  .c-color {
    width: 100px;
  }
  .c-ltype {
    width: 194px;
    margin-left: 5px;
    padding-left: 3px;
  }
  .ltline {
    width: 40px;
    height: 1px;
    background: #222;
  }
  .c-plot {
    width: 81px;
    background: #ececec;
    color: #999;
    padding-left: 4px;
  }
  .zoomgroup {
    display: flex;
    margin-left: 1px;
    padding: 0 8px 0 8px;
    height: 18px;
    align-items: center;
    border-right: 1px solid #bbb;
    border-bottom: 1px solid #bbb;
    box-sizing: border-box;
  }
  .work {
    height: 561px;
    flex: none;
    display: flex;
    background: #f0f0f0;
  }
  .left {
    flex: none;
    width: 35px;
    display: flex;
  }
  .lcol {
    width: 16px;
    padding-top: 7.500px;
    display: flex;
    flex-direction: column;
    align-items: center;
  }
  .lcol .ic {
    height: 14.600px;
  }
  .c2 {
    width: 17px;
    border-left: 1px solid #d0d0d0;
    box-sizing: border-box;
  }
  .c2 .sep {
    width: 14px;
    height: 1px;
    margin: 2px 0;
    background: #bbb;
  }
  .canvas {
    flex: none;
    width: 1217px;
    background: #000;
  }
  .canvas svg {
    display: block;
    width: 100%;
    height: 100%;
  }
  .dimtxt {
    font: italic 17px "Liberation Sans", sans-serif;
    fill: #b4b4b4;
  }
  .vscroll {
    flex: none;
    width: 13px;
    display: flex;
    flex-direction: column;
    align-items: center;
    background: #fbfbfb;
    border-left: 1px solid #d8d8d8;
    box-sizing: border-box;
  }
  .vspace {
    flex: 1;
  }
  .vthumb {
    width: 9px;
    height: 10px;
    background: #e2e2e2;
    border: 1px solid #c0c0c0;
    box-sizing: border-box;
  }
  .up, .dn {
    margin: 6px 0;
    border-left: 3px solid transparent;
    border-right: 3px solid transparent;
  }
  .up {
    border-bottom: 3px solid #333;
  }
  .dn {
    border-top: 3px solid #555;
  }
  .right {
    flex: none;
    width: 15px;
    padding-top: 7.500px;
    display: flex;
    flex-direction: column;
    align-items: center;
    box-sizing: border-box;
  }
  .right .ic {
    height: 14.700px;
  }
  .tabs {
    height: 12px;
    flex: none;
    display: flex;
    background: #f2f2f2;
    box-sizing: border-box;
  }
  .tabsvg {
    flex: none;
    width: 176px;
    height: 12px;
    font: 7.700px "Liberation Sans", sans-serif;
    fill: #222;
  }
  .t-on {
    fill: #ddd;
  }
  .hscroll {
    margin-left: 662px;
    display: flex;
    align-items: center;
    gap: 4px;
    color: #555;
  }
  .hthumb {
    width: 10px;
    height: 9px;
    background: #e2e2e2;
    border: 1px solid #bbb;
    box-sizing: border-box;
  }
  .cmd {
    height: 37px;
    flex: none;
    box-sizing: border-box;
    margin-top: 3px;
    border-top: 1px solid #777;
    padding: 3px 0 0 10px;
    font: 8.500px/9px "Liberation Mono", monospace;
    color: #222;
  }
  .hist {
    height: 22px;
    padding: 1px 2px 0;
    box-sizing: border-box;
    background: #fff;
    border-top: 1px solid #777;
    border-bottom: 1px solid #bbb;
    border-left: 1px solid #999;
  }
  .prompt {
    height: 11px;
    padding-left: 2px;
    line-height: 11px;
    background: #fff;
    border-left: 1px solid #999;
    box-sizing: border-box;
  }
  .status {
    height: 16px;
    flex: none;
    background: #f4efed;
    border-top: 1px solid #c8c8c8;
    border-bottom: 1px solid #d8d8d8;
    box-sizing: border-box;
  }
  .taskbar {
    position: relative;
    height: 26px;
    display: flex;
    align-items: center;
    background: linear-gradient(#8297ae, #7b91a9);
    flex: none;
  }
  .start {
    flex: none;
    width: 36px;
    padding-left: 4px;
    box-sizing: border-box;
  }
  .start svg {
    display: block;
    width: 26px;
    height: 26px;
  }
  .quick {
    flex: none;
    width: 108px;
    box-sizing: border-box;
    padding-left: 1px;
    display: flex;
    gap: .600px;
    margin-top: -7px;
  }
  .pinned {
    flex: none;
    display: flex;
    gap: 20px;
    width: 145px;
    padding-left: 29px;
    box-sizing: border-box;
  }
  .pinned svg {
    width: 21px;
    height: 21px;
  }
  .tasks {
    flex: none;
    display: flex;
    width: 727px;
    height: 26px;
    gap: 1.500px;
  }
  .task {
    flex: 1;
    display: flex;
    align-items: center;
    min-width: 0;
    padding-left: 6px;
    box-sizing: border-box;
    background: linear-gradient(#9aadc0, #8ea3b8);
    border: 1px solid #a9bacb;
    border-bottom: 0;
    color: #e6edf3;
    font: 8.200px "Liberation Sans", sans-serif;
    white-space: nowrap;
  }
  .task.on {
    background: linear-gradient(#b3c2d1, #a2b4c6);
    border-color: #dde5ec;
    color: #eef3f7;
  }
  .task-ic {
    flex: none;
    width: 21px;
    height: 20px;
    margin-right: 3px;
  }
  .task-ic svg {
    display: block;
    width: 100%;
    height: 100%;
  }
  .task-t {
    min-width: 0;
  }
  .lang {
    margin-left: 9px;
    font-size: 8.200px;
    color: #e6edf3;
  }
  .tray {
    display: flex;
    margin-left: 7px;
    margin-top: 3px;
    gap: 1.500px;
  }
  .tray .ic svg {
    width: 12px;
    height: 12px;
  }
  .clock {
    width: 42px;
    text-align: center;
    color: #eef3f7;
    font: 8.200px/11.500px "Liberation Sans", sans-serif;
  }
  .show {
    width: 9px;
    height: 26px;
    margin-left: auto;
    border-left: 1px solid #9fb0c2;
  }
  .balloon {
    position: absolute;
    z-index: 6;
    left: 1085px;
    top: 624px;
    width: 195px;
    height: 50px;
    box-sizing: border-box;
    padding: 4px 0 0 10px;
    background: #ffffe1;
    border: 1px solid #111;
    border-radius: 8px;
    color: #222;
    font-size: 7.800px;
  }
  .tail {
    position: absolute;
    left: 138px;
    bottom: -13px;
    width: 13px;
    height: 13px;
    overflow: visible;
  }
  .b-head {
    display: flex;
    align-items: center;
    margin-left: -3px;
    height: 12px;
  }
  .b-head svg {
    width: 10px;
    height: 10px;
    margin-right: 6px;
  }
  .b-head strong {
    font-weight: 400;
    font-size: 8.400px;
    color: #111;
    -webkit-text-stroke: 0.2px #111;
  }
  .b-x {
    position: absolute;
    right: 3px;
    top: 4px;
    width: 10px;
    height: 10px;
    line-height: 10px;
    text-align: center;
    font-size: 8px;
    border: 1px solid #777;
    background: #fff;
  }
  .balloon p {
    margin: 3px 0 0;
    white-space: nowrap;
    letter-spacing: -0.27px;
  }
  .balloon a {
    display: inline-block;
    margin-top: 3px;
    margin-left: -1px;
    letter-spacing: -0.2px;
    color: #2222cc;
  }
  .cursor {
    position: absolute;
    z-index: 7;
    left: 451px;
    top: 94px;
    width: 10px;
    height: 15px;
  }
</style>
